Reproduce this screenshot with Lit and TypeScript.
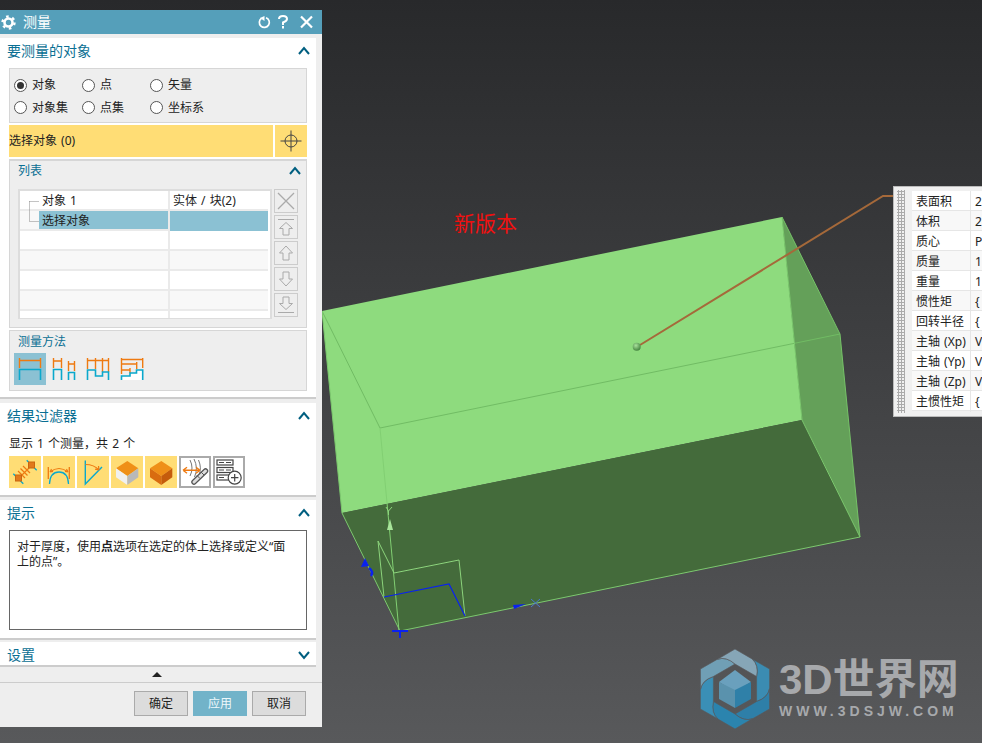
import { LitElement, html, css, svg } from 'lit';
import { customElement } from 'lit/decorators.js';

const OR = '#ee7a11';
const BL = '#0aa8cc';

const chevron = (down = false) => html`<svg class="chev" width="12" height="10" viewBox="0 0 12 10">
  <path d=${down ? 'M1 2l5 6 5-6' : 'M1 8l5-6 5 6'} fill="none" stroke="#005f80" stroke-width="2"/></svg>`;

const methodIcons = [
  svg`<path d="M5.500 5v10M26.500 5v10M5.500 7.500h21" stroke=${OR} fill="none" stroke-width="1.400"/>
      <path d="M5.500 27V16.500h21V27" stroke=${BL} fill="none" stroke-width="1.600"/>`,
  svg`<path d="M5.500 5v10M13.500 5v10M5.500 8h8M20.500 8v10M26.500 8v10M20.500 11h6" stroke=${OR} fill="none" stroke-width="1.400"/>
      <path d="M5.500 27V16.500h8V27M20.500 27V19.500h6V27" stroke=${BL} fill="none" stroke-width="1.600"/>`,
  svg`<path d="M5.500 5v11M13.500 5v11M20.500 5v14M26.500 5v14M5.500 7.500h21" stroke=${OR} fill="none" stroke-width="1.400"/>
      <path d="M5.500 27V17h8v6h7v-4h6v8" stroke=${BL} fill="none" stroke-width="1.600"/>`,
  svg`<path d="M5.500 27v-4h8.500v-3h6.500v-3h6.200v10z" fill="#fff"/>
      <path d="M5.500 5v16M26.700 5v10M5.500 6.500h21.200M5.500 11h15.200M20.700 9v7M5.500 17h8.500M14 15v5" stroke=${OR} fill="none" stroke-width="1.400"/>
      <path d="M5.500 27v-4h8.500v-3h6.500v-3h6.200v10" stroke=${BL} fill="none" stroke-width="1.600"/>`,
];

const cube = (a: string, b: string, c: string) => svg`
  <path d="M16.300 5L27.300 12.300 16.300 20 5 12.300z" fill=${a}/>
  <path d="M5 12.300L16.300 20V29L5 21.300z" fill=${b}/>
  <path d="M27.300 12.300L16.300 20V29L27.300 21.300z" fill=${c}/>`;

const filterIcons = [
  svg`<path d="M17.700 4.300l10 10M4.300 17.700l10 10" stroke=${BL} fill="none" stroke-width="1.300"/>
      <path d="M9.500 22.500L22.500 9.500M9 15l7 7M11.500 12.500l7 7M14 10l7 7" stroke=${OR} fill="none" stroke-width="1.200"/>
      <rect x="19.500" y="6" width="6" height="6" fill="#e0791c" stroke="#c9660f"/><rect x="6.500" y="19" width="6" height="6" fill="#e0791c" stroke="#c9660f"/>`,
  svg`<path d="M5.300 11v12M26.300 11v12" stroke=${OR} fill="none" stroke-width="1.300"/>
      <path d="M7 16Q16 9 25 16M7 16l3-.5M7 16l1.500-3M25 16l-3-.5M25 16l-1.500-3" stroke=${OR} fill="none" stroke-width="1.100"/>
      <path d="M6.500 28Q7 16 16 16T25.500 28" stroke=${BL} fill="none" stroke-width="1.300"/>`,
  svg`<path d="M8.300 4.500V28L25 11" stroke=${BL} fill="none" stroke-width="1.400"/>
      <path d="M8.500 8.500Q17 8.500 22 14M22 14l-.5-4M22 14l-4-.8" stroke=${OR} fill="none" stroke-width="1.200"/>`,
  cube('#ef9018', '#f0f0f0', '#b9b9b9'),
  cube('#ef8f18', '#d96c10', '#c55c0c'),
  svg`<path d="M11 4Q15 12 11 20M15 3Q19.500 12 15.500 21M19.500 4Q23 12 20 19" stroke="#777" fill="none" stroke-width="1"/>
      <path d="M4 14.300H21M4 14.300l4-3M4 14.300l4 3M21 14.300l-4-3M21 14.300l-4 3" stroke=${OR} fill="none" stroke-width="1.400"/>
      <path d="M15 26L26.500 15" stroke="#555" stroke-width="5.500" stroke-linecap="round"/>
      <path d="M15 26L26.500 15" stroke="#ddd" stroke-width="3" stroke-linecap="round"/>
      <path d="M18 19.500l3 3M22 16l3 3" stroke="#555" stroke-width="1"/>`,
  svg`<g fill="#fff" stroke="#444" stroke-width="1.200"><rect x="4" y="4" width="16" height="5"/><rect x="4" y="11.500" width="16" height="5"/><rect x="4" y="19" width="16" height="5"/></g>
      <path d="M6 6.500h5M13 6.500h5M6 14h5M13 14h5M6 21.500h5" stroke="#444" stroke-width="1"/>
      <circle cx="21.700" cy="21.700" r="6.500" fill="#fff" stroke="#444" stroke-width="1.200"/>
      <path d="M18 21.700h7.400M21.700 18v7.400" stroke="#444" stroke-width="1.200"/>`,
];

const sideIcons = [
  svg`<path d="M4 4l16 16M20 4L4 20" stroke="#aaa" stroke-width="1.300" fill="none"/>`,
  svg`<path d="M4 4.500h16M12 7.500L5.500 13.500H9V20H15V13.500H18.500z" stroke="#aaa" fill="none"/>`,
  svg`<path d="M12 5L5.500 12H9V19H15V12H18.500z" stroke="#aaa" fill="none"/>`,
  svg`<path d="M12 19L5.500 12H9V5H15V12H18.500z" stroke="#aaa" fill="none"/>`,
  svg`<path d="M4 19.500h16M12 16.500L5.500 10.500H9V4H15V10.500H18.500z" stroke="#aaa" fill="none"/>`,
];

const infoRows: [string, string][] = [
  ['表面积', '2'], ['体积', '2'], ['质心', 'P'], ['质量', '1'], ['重量', '1'], ['惯性矩', '{'],
  ['回转半径', '{'], ['主轴 (Xp)', 'V'], ['主轴 (Yp)', 'V'], ['主轴 (Zp)', 'V'], ['主惯性矩', '{'],
];

const bladeColors = ['#3b8cb2', '#2e7fa8', '#2b84ae', '#3a8fb6', '#709fb5', '#86a6b7'];

@customElement('app-root')
export class AppRoot extends LitElement {
  static styles = css`
    :host {
      display: block; position: relative; width: 982px; height: 743px; overflow: hidden;
      background: linear-gradient(#28292b, #58595b);
      font: 12px/16px "Noto Sans", "Noto Sans CJK SC", sans-serif; color: #222; word-spacing: 1px;
    }
    .scene { position: absolute; inset: 0; }
    .version { position: absolute; left: 454px; top: 210px; font-size: 21px; line-height: 27px; color: #f01010; }

    .panel {
      position: absolute; left: 0; top: 10px; width: 322px; height: 717px; background: #eee;
      display: flex; flex-direction: column;
    }
    .title {
      height: 24px; flex: none; background: #559fba; color: #fff; margin-bottom: 4px;
      display: flex; align-items: center; padding: 0 8px 0 1px; font-size: 14px;
    }
    .title .name { margin-left: 7px; flex: 1; }
    .title svg { display: block; }
    .tools { display: flex; gap: 7px; align-items: center; }
    .tools .help { margin-right: 4px; }

    .section { width: 316px; flex: none; background: #fff; border-bottom: 2px solid #ccc; box-sizing: border-box; }
    .s1 { height: 361px; margin-bottom: 4px; }
    .s2 { height: 94px; margin-bottom: 3px; }
    .s3 { height: 140px; margin-bottom: 2px; }
    .s4 { height: 25px; }
    .head {
      height: 26px; display: flex; align-items: center; justify-content: space-between;
      padding: 0 6px 0 7px; font-size: 14px; color: #0a6f93;
    }
    .group { margin: 0 0 0 9px; width: 298px; box-sizing: border-box; background: #eee; border: 1px solid #d6d6d6; }
    .radios {
      margin-top: 4px; height: 55px; display: grid; grid-template-columns: 68px 68px 1fr;
      grid-auto-rows: 22.5px; padding: 5px 0 0 4px; box-sizing: border-box; margin-bottom: 2px;
    }
    .radio { display: flex; align-items: center; gap: 5px; }
    .radio i {
      width: 13px; height: 13px; box-sizing: border-box; border: 1px solid #555; border-radius: 50%;
      background: #fff; display: block; position: relative;
    }
    .radio i.on::after {
      content: ""; position: absolute; left: 2px; top: 2px; width: 7px; height: 7px; border-radius: 50%; background: #333;
    }

    .pick { display: flex; gap: 2px; margin: 0 0 2px 9px; width: 298px; height: 32px; }
    .pick .label { flex: 1; background: #ffdd75; line-height: 32px; }
    .pick .btn { width: 32px; background: #ffdd75; display: flex; align-items: center; justify-content: center; }

    .list { height: 169px; margin-bottom: 2px; border-width: 2px 1px 1px; padding: 0 8px; }
    .subhead {
      height: 20px; display: flex; align-items: center; justify-content: space-between;
      color: #0a6f93; margin-right: -3px;
    }
    .listbody { display: flex; gap: 2px; margin-top: 8px; }
    .table {
      position: relative; width: 254px; height: 130px; box-sizing: border-box;
      border: 2px solid #ddd; border-bottom-width: 1px; overflow: hidden; background: #fff;
    }
    .row { display: grid; grid-template-columns: 150px 1fr; height: 20px; box-sizing: border-box; border-bottom: 2px solid #eaeaea; margin-right: 2px; }
    .row:nth-child(even) { background: #f8f8f8; }
    .row > div { line-height: 20px; padding-left: 22px; border-right: 2px solid #eaeaea; box-sizing: border-box; }
    .row > div + div { padding-left: 3px; border-right: 0; }
    .row.sel { background: linear-gradient(90deg, #f8f8f8 19px, #8bc1d3 19px); }
    .row.sel > div + div { background: #8bc1d3; }
    .tree { position: absolute; left: 0; top: 0; }
    .side { display: flex; flex-direction: column; gap: 2px; }
    .side div { width: 24px; height: 24px; box-sizing: border-box; border: 1px solid #ccc; background: #eee; }
    .side svg { display: block; margin: -1px; }

    .method { height: 61px; padding: 0 0 0 4px; border-width: 1px; }
    .method .cap { color: #0a6f93; height: 22px; line-height: 21px; padding-left: 4px; }
    .strip { display: flex; gap: 2px; }
    .ic { width: 32px; height: 32px; display: block; flex: none; }
    .ic.sel { background: #8bc1d3; }
    .ic.hot { background: #ffdd75; }
    .ic.out { background: #fff; outline: 2px solid #aaa; outline-offset: -2px; }

    .count { padding: 0 0 0 9px; height: 27px; line-height: 29px; }
    .filters { display: flex; gap: 2px; margin-left: 9px; }
    .hint {
      margin: 4px 0 0 9px; width: 298px; height: 100px; box-sizing: border-box;
      border: 1px solid #666; padding: 8px 7px; line-height: 15px; white-space: nowrap;
    }
    .more { height: 15px; flex: none; position: relative; display: flex; justify-content: center; align-items: center; width: 314px; }
    .more::after { content: ""; border: 5px solid transparent; border-top-width: 0; border-bottom: 5px solid #222; }
    .foot {
      flex: 1; border-top: 1px solid #ccc; display: flex; justify-content: flex-end; gap: 5px;
      padding: 8px 16px 0 0; box-sizing: border-box;
    }
    .foot div {
      width: 54px; height: 25px; box-sizing: border-box; border: 1px solid #aaa; background: #dcdcdc;
      text-align: center; line-height: 23px;
    }
    .foot .apply { background: #72b3c9; border-color: #72b3c9; color: #eef8fb; }

    .info {
      position: absolute; left: 893px; top: 186px; width: 95px; height: 231px; box-sizing: border-box;
      background: #f0f0f0; border: 1px solid #bbb; border-right: 0; padding: 4px 0 0 18px;
    }
    .info::before {
      content: ""; position: absolute; left: 3px; top: 3px; bottom: 3px; width: 8px;
      background: radial-gradient(circle, #aaa 1px, transparent 1.200px) 0 0 / 3px 3px;
    }
    .info .cell { display: grid; grid-template-columns: 59px 1fr; height: 20px; background: #fff; border-bottom: 1px solid #e6e6e6; box-sizing: border-box; }
    .info .cell:nth-child(even) { background: #f8f8f8; }
    .info .cell span { line-height: 21px; padding-left: 4px; border-right: 1px solid #e6e6e6; white-space: nowrap; }
    .info .cell span + span { border: 0; }

    .logo { position: absolute; left: 779px; top: 657px; color: #a7a9ac; word-spacing: 0; }
    .logo .big { font: 700 42px/46px "Liberation Sans", "Noto Sans CJK SC", sans-serif; white-space: nowrap; }
    .logo .url { font: 700 14px/14px "Liberation Sans", sans-serif; letter-spacing: 4px; white-space: nowrap; margin-top: 1px; }
  `;

  private scene() {
    return html`<svg class="scene" width="982" height="743" viewBox="0 0 982 743">
      <defs>
        <radialGradient id="dot" cx="0.4" cy="0.35" r="0.7"><stop offset="0" stop-color="#a9e29c"/><stop offset="1" stop-color="#3f7f3a"/></radialGradient>
      </defs>
      <polygon points="322,311 782,217 802,420 342,513" fill="#8edb7e"/>
      <polygon points="782,217 840,334 860,537 802,420" fill="#64a059"/>
      <polygon points="342,513 802,420 860,537 400,631" fill="#446b3b"/>
      <g fill="none" stroke-width="1">
        <path d="M322 311L380 428L840 334" stroke="#71bc64"/>
        <path d="M782 217L802 420" stroke="#7cc96e"/>
        <path d="M782 217L840 334L860 537" stroke="#76c268"/>
        <path d="M322 311L342 513L400 631L860 537L802 420" stroke="#7cc96e"/>
        <path d="M380 428L399 631" stroke="#82cf73"/>
        <path d="M378 541L394 573L459 560L465 616M378 541L384 597" stroke="#8cd47c"/>
        <path d="M384 597L449 584L465 616" stroke="#0a22ee" stroke-width="1.200"/>
        <path d="M392 631H408M400 631V638" stroke="#0a22ee" stroke-width="2"/>
        <path d="M386 507L388.500 511L392 507M388.500 511V515" stroke="#8cd47c"/>
        <path d="M531 599L540 607M540 599L531 607" stroke="#4a78c8"/>
      </g>
      <polygon points="390,519 387,530 393,530" fill="#a8e59a"/>
      <polygon points="365,558 361,567 369,566" fill="#0a22ee"/>
      <path d="M369 568Q374 572 371 576" stroke="#0a22ee" stroke-width="2.500" fill="none"/>
      <polygon points="513,605 526,604 514,609" fill="#0a22ee"/>
      <path d="M640 345L883 196H893" fill="none" stroke="#a5693a" stroke-width="2"/>
      <circle cx="636.700" cy="346.700" r="4" fill="url(#dot)"/>
      <g transform="translate(735 689)">
        ${bladeColors.map((c, i) => svg`<path transform="rotate(${i * 60})" fill=${c} stroke="#58595b" stroke-width=".6"
          d="M17-30L34.600-20V-.3Q32.800 8.800 21.600 12.500V-12.500Q24-24 17-30Z"/>`)}
        <path d="M0-19L16-7-0 3-16-7Z" fill="#6aa0bd"/>
        <path d="M-16-7L0 1V19L-16 10Z" fill="#5a92ad"/>
        <path d="M16-7L0 1V19L16 10Z" fill="#2f80a8"/>
      </g>
    </svg>`;
  }

  private panel() {
    const radios: [string, boolean][] = [['对象', true], ['点', false], ['矢量', false], ['对象集', false], ['点集', false], ['坐标系', false]];
    return html`<div class="panel">
      <div class="title">
        <svg width="15" height="15" viewBox="0 0 15 15">
          <circle cx="7.500" cy="7.500" r="4" fill="none" stroke="#fff" stroke-width="2.600"/>
          <circle cx="7.500" cy="7.500" r="6" fill="none" stroke="#fff" stroke-width="2.400" stroke-dasharray="2.600 3.680"/>
        </svg>
        <span class="name">测量</span>
        <div class="tools">
          <svg width="13" height="13" viewBox="0 0 13 13"><path d="M3.500 2.300A5 5 0 1 0 8 1.700" fill="none" stroke="#fff" stroke-width="1.700"/><path d="M5.500 0V5L1 2z" fill="#fff" transform="translate(1 0)"/></svg>
          <svg class="help" width="10" height="14" viewBox="0 0 10 14"><path d="M1 4Q1 1 5 1T9 4Q9 6 5 7.500V10" fill="none" stroke="#fff" stroke-width="2"/><rect x="4" y="11" width="2" height="2.500" fill="#fff"/></svg>
          <svg width="15" height="14" viewBox="0 0 15 14"><path d="M2 1.500l11 11M13 1.500l-11 11" stroke="#fff" stroke-width="2.200"/></svg>
        </div>
      </div>

      <div class="section s1">
        <div class="head"><span>要测量的对象</span>${chevron()}</div>
        <div class="group radios">
          ${radios.map(([t, on]) => html`<label class="radio"><i class=${on ? 'on' : ''}></i>${t}</label>`)}
        </div>
        <div class="pick">
          <div class="label">选择对象 (0)</div>
          <div class="btn"><svg width="22" height="22" viewBox="0 0 22 22"><circle cx="11" cy="11" r="6" fill="none" stroke="#444"/><path d="M.5 11h21M11 .5v21" stroke="#444"/></svg></div>
        </div>
        <div class="group list">
          <div class="subhead"><span>列表</span>${chevron()}</div>
          <div class="listbody">
            <div class="table">
              <div class="row"><div>对象 1</div><div>实体 / 块(2)</div></div>
              <div class="row sel"><div>选择对象</div><div></div></div>
              ${[0, 1, 2, 3, 4].map(() => html`<div class="row"><div></div><div></div></div>`)}
              <svg class="tree" width="30" height="40"><path d="M9.500 10.500H19M9.500 10.500V30.500H19" fill="none" stroke="#888" stroke-dasharray="1 1"/></svg>
            </div>
            <div class="side">
              ${sideIcons.map((p) => html`<div><svg width="24" height="24" viewBox="0 0 24 24">${p}</svg></div>`)}
            </div>
          </div>
        </div>
        <div class="group method">
          <div class="cap">测量方法</div>
          <div class="strip">
            ${methodIcons.map((p, i) => html`<svg class="ic ${i === 0 ? 'sel' : ''}" viewBox="0 0 32 32">${p}</svg>`)}
          </div>
        </div>
      </div>

      <div class="section s2">
        <div class="head"><span>结果过滤器</span>${chevron()}</div>
        <div class="count">显示 1 个测量，共 2 个</div>
        <div class="filters">
          ${filterIcons.map((p, i) => html`<svg class="ic ${i < 5 ? 'hot' : 'out'}" viewBox="0 0 32 32">${p}</svg>`)}
        </div>
      </div>

      <div class="section s3">
        <div class="head"><span>提示</span>${chevron()}</div>
        <div class="hint">对于厚度，使用<b>点</b>选项在选定的体上选择或定义“面<br>上的点”。</div>
      </div>

      <div class="section s4">
        <div class="head"><span>设置</span>${chevron(true)}</div>
      </div>

      <div class="more"></div>
      <div class="foot">
        <div>确定</div><div class="apply">应用</div><div>取消</div>
      </div>
    </div>`;
  }

  render() {
    return html`
      ${this.scene()}
      <div class="version">新版本</div>
      ${this.panel()}
      <div class="info">
        ${infoRows.map(([k, v]) => html`<div class="cell"><span>${k}</span><span>${v}</span></div>`)}
      </div>
      <div class="logo">
        <div class="big">3D世界网</div>
        <div class="url">WWW.3DSJW.COM</div>
      </div>
    `;
  }
}
